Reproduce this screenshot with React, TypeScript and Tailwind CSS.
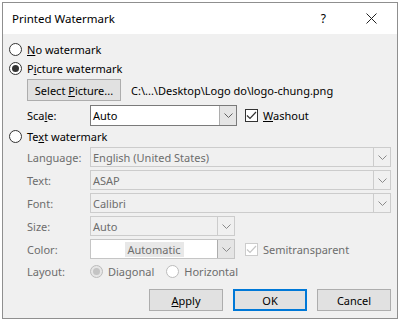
const font = { fontFamily: '"Segoe UI", "Noto Sans", "Open Sans", sans-serif' };

function Chevron({ color = "#606060" }: { color?: string }) {
  return (
    <svg width="9" height="5" viewBox="0 0 9 5" fill="none">
      <path d="M0.5 0.5 L4.5 4.5 L8.5 0.5" stroke={color} strokeWidth="1" />
    </svg>
  );
}

function Radio({ checked, disabled }: { checked?: boolean; disabled?: boolean }) {
  const ring = disabled ? "border-[#bcbcbc]" : "border-[#333333]";
  const bg = disabled && checked ? "bg-[#e6e6e6]" : "bg-white";
  return (
    <span className={`flex h-[13px] w-[13px] shrink-0 items-center justify-center rounded-full border ${ring} ${bg}`}>
      {checked && (
        <span className={`h-[7px] w-[7px] rounded-full ${disabled ? "bg-[#c4c4c4]" : "bg-[#333333]"}`} />
      )}
    </span>
  );
}

function Check({ disabled }: { disabled?: boolean }) {
  const stroke = disabled ? "#c6c6c6" : "#333333";
  return (
    <span
      className={`flex h-[13px] w-[13px] shrink-0 items-center justify-center border ${
        disabled ? "border-[#cccccc]" : "border-[#333333]"
      } bg-white`}
    >
      <svg width="11" height="9" viewBox="0 0 11 9" fill="none">
        <path d="M1 4.5 L4 7.5 L10 1" stroke={stroke} strokeWidth="1.2" />
      </svg>
    </span>
  );
}

function Combo({
  value,
  width,
  enabled,
  white,
  center,
}: {
  value: string;
  width: string;
  enabled?: boolean;
  white?: boolean;
  center?: boolean;
}) {
  return (
    <div
      className={`flex h-full ${width} border ${
        enabled ? "border-[#7a7a7a] bg-white" : white ? "border-[#c5c5c5] bg-white" : "border-[#cccccc] bg-[#f0f0f0]"
      }`}
    >
      <div className={`flex flex-1 items-center px-[2px] ${center ? "justify-center" : ""}`}>
        <span
          className={`${enabled ? "text-[#000000]" : "text-[#6d6d6d]"} ${center ? "bg-[#e8e8e8] px-[3px] py-[2px]" : ""}`}
        >
          {value}
        </span>
      </div>
      <div
        className={`flex w-[17px] items-center justify-center border-l ${
          enabled || white ? "border-[#adadad] bg-[#e5e5e5]" : "border-[#cccccc] bg-[#f0f0f0]"
        }`}
      >
        <Chevron color={enabled ? "#606060" : "#8a8a8a"} />
      </div>
    </div>
  );
}

function Button({ children, primary }: { children: React.ReactNode; primary?: boolean }) {
  return (
    <div
      className={`flex h-[22px] w-[74px] items-center justify-center bg-[#e1e1e1] text-black ${
        primary ? "border-2 border-[#0078d7]" : "border border-[#adadad]"
      }`}
    >
      <span>{children}</span>
    </div>
  );
}

function FieldRow({ label, children, mt }: { label: string; children: React.ReactNode; mt: string }) {
  return (
    <div className={`flex h-[20px] items-center ${mt}`}>
      <span className="w-[63px] pl-[24px] box-content text-[#6d6d6d]">{label}</span>
      {children}
    </div>
  );
}

export default function App() {
  return (
    <div className="h-[321px] w-[400px] overflow-hidden bg-white pl-[2px] pt-[2px]" style={font}>
      <div className="flex h-[317px] w-[396px] flex-col border border-[#8f8f8f] text-[11px] leading-none text-black">
        <div className="flex h-[31px] shrink-0 items-center bg-white">
          <span className="pl-[9px] text-[11.5px] text-black">Printed Watermark</span>
          <span className="ml-auto mr-[40px] text-[12px]">?</span>
          <svg width="11" height="11" viewBox="0 0 11 11" className="mr-[20px]">
            <path d="M0.5 0.5 L10.5 10.5 M10.5 0.5 L0.5 10.5" stroke="#222" strokeWidth="1" />
          </svg>
        </div>
        <div className="flex flex-1 flex-col bg-[#f0f0f0] pt-[6px]">
          <div className="flex h-[19px] items-center gap-[5px] pl-[6px]">
            <Radio />
            <span>
              <u>N</u>o watermark
            </span>
          </div>
          <div className="flex h-[19px] items-center gap-[5px] pl-[6px]">
            <Radio checked />
            <span>
              P<u>i</u>cture watermark
            </span>
          </div>
          <div className="mt-[1px] flex h-[22px] items-center pl-[24px]">
            <div className="flex h-[22px] w-[94px] items-center justify-center border border-[#adadad] bg-[#e1e1e1]">
              <span>
                Select <u>P</u>icture...
              </span>
            </div>
            <span className="ml-[10px]">C:\...\Desktop\Logo do\logo-chung.png</span>
          </div>
          <div className="mt-[4px] flex h-[21px] items-center">
            <span className="w-[63px] box-content pl-[24px]">
              Sca<u>l</u>e:
            </span>
            <Combo value="Auto" width="w-[147px]" enabled />
            <div className="ml-[8px] flex items-center gap-[5px]">
              <Check />
              <span>
                <u>W</u>ashout
              </span>
            </div>
          </div>
          <div className="flex h-[20px] items-center gap-[5px] pl-[6px]">
            <Radio />
            <span>
              Te<u>x</u>t watermark
            </span>
          </div>
          <FieldRow label="Language:" mt="mt-[1px]">
            <Combo value="English (United States)" width="w-[301px]" />
          </FieldRow>
          <FieldRow label="Text:" mt="mt-[3px]">
            <Combo value="ASAP" width="w-[301px]" />
          </FieldRow>
          <FieldRow label="Font:" mt="mt-[3px]">
            <Combo value="Calibri" width="w-[301px]" />
          </FieldRow>
          <FieldRow label="Size:" mt="mt-[3px]">
            <Combo value="Auto" width="w-[145px]" />
          </FieldRow>
          <FieldRow label="Color:" mt="mt-[3px]">
            <Combo value="Automatic" width="w-[145px]" white center />
            <div className="ml-[10px] flex items-center gap-[5px]">
              <Check disabled />
              <span className="text-[#6d6d6d]">Semitransparent</span>
            </div>
          </FieldRow>
          <FieldRow label="Layout:" mt="mt-[2px]">
            <div className="flex items-center gap-[5px]">
              <Radio checked disabled />
              <span className="text-[#6d6d6d]">Diagonal</span>
            </div>
            <div className="ml-[12px] flex items-center gap-[5px]">
              <Radio disabled />
              <span className="text-[#6d6d6d]">Horizontal</span>
            </div>
          </FieldRow>
          <div className="mt-[8px] flex items-center justify-end gap-[10px] pr-[6px]">
            <Button>
              <u>A</u>pply
            </Button>
            <Button primary>OK</Button>
            <Button>Cancel</Button>
          </div>
        </div>
      </div>
    </div>
  );
}
